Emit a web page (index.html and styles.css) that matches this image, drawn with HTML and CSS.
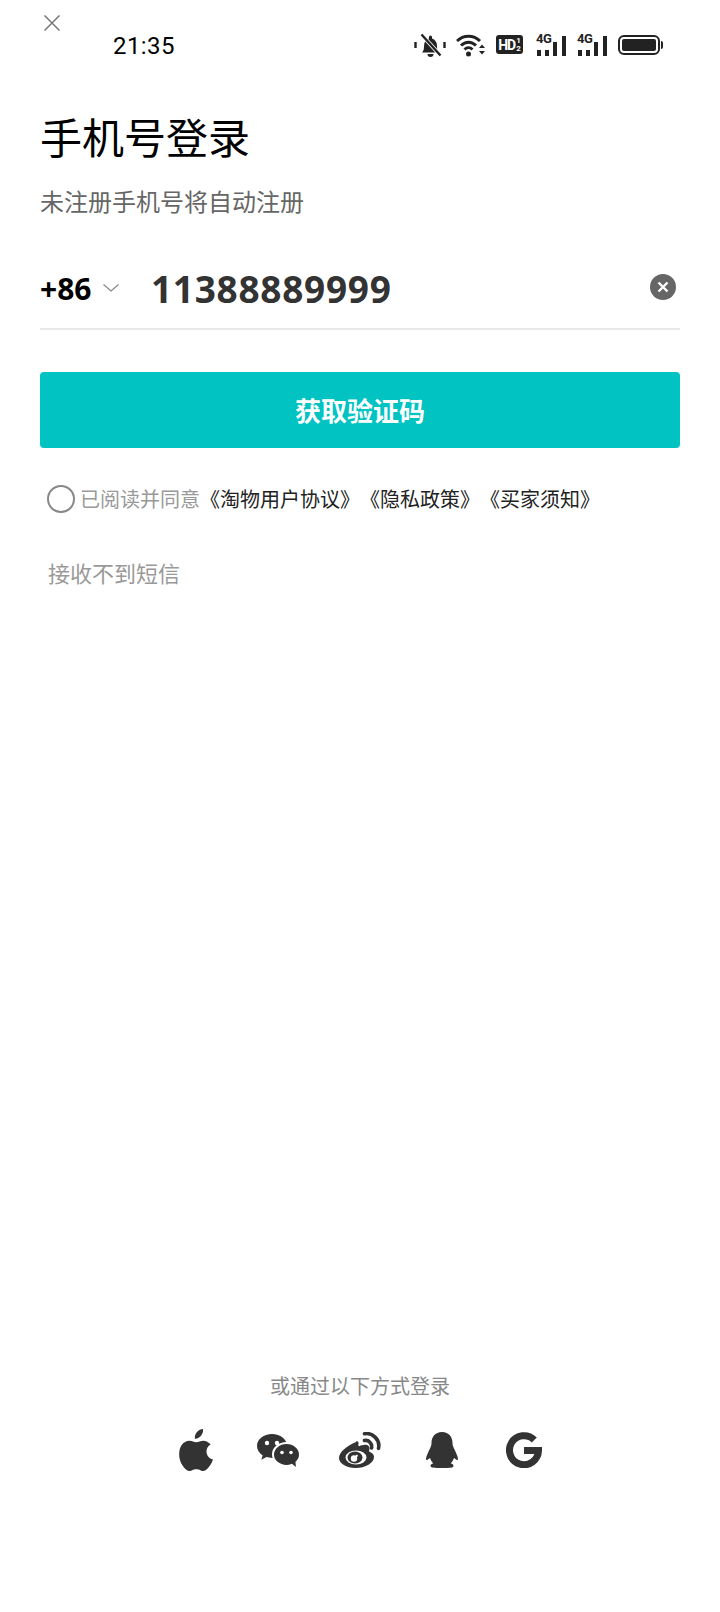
FILE: index.html
```html
<!DOCTYPE html>
<html lang="zh-CN">
<head>
  <meta charset="UTF-8" />
  <meta name="viewport" content="width=device-width, initial-scale=1" />
  <title>手机号登录</title>
  <link rel="stylesheet" href="styles.css">
</head>
<body>
  <div class="page">
    <svg class="close" viewBox="0 0 16 16" width="16" height="16"><path d="M.5.5l15 15M15.500.5l-15 15" stroke="#777" stroke-width="1.500" fill="none"/></svg>

    <div class="status">
      <span class="time">21:35</span>
      <div class="status-icons">
        <svg width="32" height="24" viewBox="0 0 32 24"><path d="M8 19.500c1.500-1.500 2-3 2-6.500 0-4 2-6.500 5-7.500V4a1.500 1.500 0 0 1 3 0v1.500c3 1 5 3.500 5 7.500 0 3.500.5 5 2 6.500z" fill="#222"/><path d="M13.500 21h6a3 3 0 0 1-6 0z" fill="#222"/><path d="M7 1l20 22" stroke="#fff" stroke-width="4"/><path d="M7.500 1.500l19 21" stroke="#222" stroke-width="2.400"/><path d="M1.500 9v6M30.500 9v6" stroke="#222" stroke-width="2.400"/></svg>
        <svg width="30" height="24" viewBox="0 0 30 24"><path d="M1 8c6.500-6.500 16.500-6.500 23 0M5 12.500c4.500-4.500 10.500-4.500 15 0M8.500 16.500c2.500-2.500 5.500-2.500 8 0" stroke="#222" stroke-width="3" fill="none"/><circle cx="12.500" cy="21" r="2.500" fill="#222"/><path d="M23 15h6l-3-3.500zM23 18h6l-3 3.500z" fill="#222"/></svg>
        <div class="hd-badge"><span>HD</span><span class="hd-sub">1<br>2</span></div>
        <div class="signal"><span class="net">4G</span><i class="b1"></i><i class="b2"></i><i class="b3"></i><i class="b4"></i></div>
        <div class="signal"><span class="net">4G</span><i class="b1"></i><i class="b2"></i><i class="b3"></i><i class="b4"></i></div>
        <div class="battery"><div class="battery-fill"></div></div>
      </div>
    </div>

    <h1 class="title">手机号登录</h1>
    <p class="subtitle">未注册手机号将自动注册</p>

    <div class="phone-row">
      <span class="code">+86</span>
      <svg class="chevron" width="16" height="8" viewBox="0 0 16 8"><path d="M.5.5L8 7 15.500.5" stroke="#888" stroke-width="1.200" fill="none"/></svg>
      <span class="number">11388889999</span>
      <svg class="clear" width="26" height="26" viewBox="0 0 26 26"><circle cx="13" cy="13" r="13" fill="#666"/><path d="M8.500 8.500l9 9M17.500 8.500l-9 9" stroke="#fff" stroke-width="2.400"/></svg>
    </div>

    <button class="submit">获取验证码</button>

    <div class="agree">
      <span class="radio"></span>
      <span class="agree-text">已阅读并同意</span><span class="links">《淘物用户协议》《隐私政策》《买家须知》</span>
    </div>

    <div class="no-sms">接收不到短信</div>

    <div class="spacer"></div>

    <div class="other">或通过以下方式登录</div>
    <div class="socials">
      <svg width="34" height="42" viewBox="0 0 34 42"><path d="M24 0c.4 3-.8 5.300-2.200 7-1.500 1.700-3.700 2.900-6 2.700-.4-2.700.9-5.300 2.200-6.800C19.500 1.200 22 .1 24 0z" fill="#333"/><path d="M34 30.500c-.9 2.400-1.400 3.500-2.700 5.500-1.800 2.700-4.200 6-7.200 6-2.600 0-3.300-1.700-6.800-1.700-3.500 0-4.300 1.700-6.900 1.700-3 0-5.200-3-7-5.700C-.600 30.500-.9 21.500 2.500 16.300c2-3 5-4.600 7.800-4.600 2.900 0 4.700 1.600 7.100 1.600 2.300 0 3.700-1.600 7-1.600 2.600 0 5.300 1.400 7.300 3.800-6.400 3.500-5.400 12.800 2.300 15z" fill="#333"/></svg>
      <svg width="42" height="33" viewBox="0 0 42 33"><path d="M15 0C6.700 0 0 5.300 0 12c0 3.900 2.200 7.200 5.700 9.400L4.300 25.800l5.200-2.700c1.700.5 3.600.8 5.500.8 8.300 0 15-5.300 15-12S23.300 0 15 0z" fill="#333"/><ellipse cx="29.500" cy="20.500" rx="13.500" ry="11.500" fill="#333" stroke="#fff" stroke-width="2"/><path d="M34 29l5 4-.8-7z" fill="#333"/><circle cx="10" cy="9" r="2.200" fill="#fff"/><circle cx="20" cy="9" r="2.200" fill="#fff"/><circle cx="25" cy="18.500" r="1.800" fill="#fff"/><circle cx="34" cy="18.500" r="1.800" fill="#fff"/></svg>
      <svg width="42" height="36" viewBox="0 0 42 36"><path d="M17 10C8 14 0 20 0 26c0 5.500 7.500 10 16.500 10C26.500 36 35 31 35 25c0-3.800-4.300-5-4.800-5.500-.6-.6 1.300-3.500-.7-5.500-2.300-2.300-7.700-.5-8.700 0-1.200.5-1.600-.2-1.300-1.800.3-2.500-.8-3.500-2.500-2.700z" fill="#333"/><ellipse cx="17" cy="25.500" rx="10.500" ry="7" fill="#fff"/><ellipse cx="16" cy="25.500" rx="7.500" ry="6" fill="#333"/><circle cx="15" cy="26.500" r="3.200" fill="#fff"/><circle cx="17.800" cy="23.800" r="1.100" fill="#fff"/><path d="M25.500 8.500c4-1 8 3 7 7.500M25.500 1.800c7.500-1.500 16 5.500 14 14.500" stroke="#333" stroke-width="3.600" stroke-linecap="round" fill="none"/></svg>
      <svg width="32" height="36" viewBox="0 0 32 36"><path d="M16 0C9 0 5.500 5 5.500 11c0 2-.6 3.500-1.500 5.500C2.300 20 0 24.500 0 27c0 .8.500 1.300 1.200.9l2.800-2c.8 2.300 1.700 4 3.300 5.300C5.800 31.800 4.500 32.500 4.500 34c0 1.800 3.500 2 11.500 2s11.500-.2 11.500-2c0-1.500-1.300-2.200-2.800-2.800 1.600-1.300 2.500-3 3.300-5.300l2.800 2c.7.400 1.200-.1 1.200-.9 0-2.500-2.300-7-4-10.500-.9-2-1.500-3.500-1.500-5.500C26.500 5 23 0 16 0z" fill="#333"/></svg>
      <svg width="36" height="36" viewBox="0 0 36 36"><path d="M28.300 8A14.500 14.500 0 1 0 32.500 18.500H18" stroke="#333" stroke-width="7" fill="none"/></svg>
    </div>
  </div>
</body>
</html>
```

FILE: styles.css
```css
html, body { margin: 0; padding: 0; background: #fff; }
body { font-family: "Noto Sans", "Noto Sans CJK SC", sans-serif; color: #000; text-spacing-trim: space-all; }

.page { width: 720px; height: 1612px; display: flex; flex-direction: column; padding: 0 40px; box-sizing: border-box; position: relative; }
.close { position: absolute; left: 44px; top: 15px; }

.status { display: flex; align-items: center; justify-content: space-between; height: 30px; margin-top: 31px; }
.time { margin-left: 73px; font: 24px "Roboto", sans-serif; letter-spacing: .4px; }
.status-icons { display: flex; align-items: center; gap: 10px; margin-right: 17px; margin-bottom: 3px; }
.hd-badge { display: flex; align-items: center; justify-content: center; gap: 1px; width: 27px; height: 19px; box-sizing: border-box; margin-right: 3px; background: #222; border-radius: 3px; color: #fff; font: bold 14px "Roboto", sans-serif; letter-spacing: -1px; }
.hd-sub { font-size: 8px; line-height: 8px; letter-spacing: 0; }
.signal { width: 31px; height: 22px; position: relative; }
.signal .net { position: absolute; left: 0; top: -3px; font: bold 13px "Roboto", sans-serif; letter-spacing: -.5px; color: #222; }
.signal i { position: absolute; bottom: 0; width: 4px; background: #222; }
.signal .b1 { left: 1px; height: 6px; }
.signal .b2 { left: 9px; height: 6px; }
.signal .b3 { left: 17px; height: 14px; }
.signal .b4 { left: 26px; height: 20px; }
.battery { width: 42px; height: 20px; box-sizing: border-box; padding: 2px; border: 2px solid #222; border-radius: 6px; position: relative; margin-right: 3px; }
.battery::after { content: ""; position: absolute; right: -5px; top: 4px; width: 2px; height: 8px; background: #222; border-radius: 0 2px 2px 0; }
.battery-fill { height: 100%; background: #222; border-radius: 2px; }

.title { margin: 47px 0 0; font-size: 42px; font-weight: 400; line-height: 60px; }
.subtitle { margin: 16px 0 0; font-size: 24px; line-height: 36px; color: #666; }

.phone-row { display: flex; align-items: center; height: 80px; margin-top: 28px; border-bottom: 2px solid #e8e8e8; }
.code { font-size: 30px; font-weight: 700; width: 63px; }
.number { flex: 1; margin-left: 32px; font-size: 37px; font-weight: 700; color: #333; letter-spacing: .7px; }
.clear { margin-right: 4px; margin-bottom: 2px; }

.submit { display: block; width: 100%; height: 76px; margin-top: 42px; border: 0; border-radius: 4px; background: #00c3c2; color: #fff; font-family: inherit; font-size: 26px; font-weight: 700; }

.agree { display: flex; align-items: center; margin-top: 36px; padding-left: 7px; font-size: 20px; }
.radio { width: 24px; height: 24px; border: 2px solid #888; border-radius: 50%; margin-right: 5px; }
.agree-text { color: #999; }
.links { color: #222; }

.no-sms { margin-top: 44px; padding-left: 8px; font-size: 22px; line-height: 32px; color: #999; }

.spacer { flex: 1; }

.other { text-align: center; font-size: 20px; line-height: 30px; color: #888; }
.socials { display: grid; grid-template-columns: repeat(5, 82px); justify-content: center; justify-items: center; align-items: center; height: 44px; margin-top: 26px; margin-bottom: 140px; }
```
